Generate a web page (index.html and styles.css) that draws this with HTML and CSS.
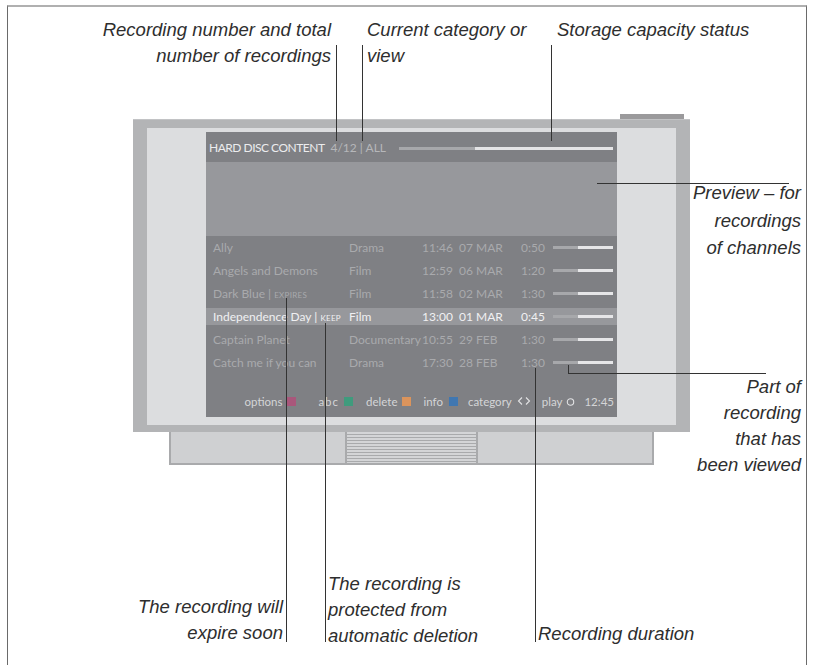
FILE: index.html
```html
<!DOCTYPE html>
<html lang="en">
<head>
    <meta charset="UTF-8">
    <meta name="viewport" content="width=device-width, initial-scale=1.0">
    <title>Hard Disc Content</title>
    <link rel="stylesheet" href="styles.css">
</head>
<body>

    <div class="sheet">

        <!-- Television -->
        <div class="device">
            <div class="knob"></div>
            <div class="cabinet">
                <div class="bezel">
                    <div class="screen">

                        <div class="hdr">
                            <span class="hdr-title">HARD DISC CONTENT</span>
                            <span class="hdr-count">4/12 | ALL</span>
                            <span class="storage"></span>
                        </div>

                        <div class="preview"></div>

                        <div class="list">
                            <div class="row">
                                <span>Ally</span><span>Drama</span><span>11:46</span><span>07 MAR</span><span class="dur">0:50</span><span class="seen"></span>
                            </div>
                            <div class="row">
                                <span>Angels and Demons</span><span>Film</span><span>12:59</span><span>06 MAR</span><span class="dur">1:20</span><span class="seen"></span>
                            </div>
                            <div class="row">
                                <span>Dark Blue | <small>EXPIRES</small></span><span>Film</span><span>11:58</span><span>02 MAR</span><span class="dur">1:30</span><span class="seen"></span>
                            </div>
                            <div class="row selected">
                                <span>Independence Day | <small>KEEP</small></span><span>Film</span><span>13:00</span><span>01 MAR</span><span class="dur">0:45</span><span class="seen"></span>
                            </div>
                            <div class="row">
                                <span>Captain Planet</span><span>Documentary</span><span>10:55</span><span>29 FEB</span><span class="dur">1:30</span><span class="seen"></span>
                            </div>
                            <div class="row">
                                <span>Catch me if you can</span><span>Drama</span><span>17:30</span><span>28 FEB</span><span class="dur">1:30</span><span class="seen"></span>
                            </div>
                        </div>

                        <div class="keys">
                            <span class="key">options <i class="sq pink"></i></span>
                            <span class="key abc">abc <i class="sq green"></i></span>
                            <span class="key del">delete <i class="sq orange"></i></span>
                            <span class="key info">info <i class="sq blue"></i></span>
                            <span class="key cat">category
                                <svg width="14" height="10" viewBox="0 0 14 10"><path d="M5 1.5 1.5 5 5 8.5M9 1.5 12.5 5 9 8.5" fill="none" stroke="#e2e2e4" stroke-width="1.1"/></svg>
                            </span>
                            <span class="key play">play
                                <svg width="9" height="9" viewBox="0 0 9 9"><circle cx="4.5" cy="5" r="3.2" fill="none" stroke="#e2e2e4" stroke-width="1.1"/></svg>
                            </span>
                            <span class="key clock">12:45</span>
                        </div>

                    </div>
                </div>
            </div>
            <div class="stand">
                <div class="foot"></div>
                <div class="grille"></div>
                <div class="foot"></div>
            </div>
        </div>

        <!-- Callouts -->
        <p class="note n-number">Recording number and total<br>number of recordings</p>
        <p class="note n-category">Current category or<br>view</p>
        <p class="note n-storage">Storage capacity status</p>
        <p class="note n-preview">Preview – for<br>recordings<br>of channels</p>
        <p class="note n-viewed">Part of<br>recording<br>that has<br>been viewed</p>
        <p class="note n-expire">The recording will<br>expire soon</p>
        <p class="note n-keep">The recording is<br>protected from<br>automatic deletion</p>
        <p class="note n-duration">Recording duration</p>

        <div class="lead v l-number"></div>
        <div class="lead v l-category"></div>
        <div class="lead v l-storage"></div>
        <div class="lead h l-preview"></div>
        <div class="lead v l-viewed-v"></div>
        <div class="lead h l-viewed-h"></div>
        <div class="lead v l-expire"></div>
        <div class="lead v l-keep"></div>
        <div class="lead v l-duration"></div>

    </div>

</body>
</html>
```

FILE: styles.css
```css
body {
    margin: 0;
    background: #fff;
    overflow: hidden;
}
.sheet {
    position: relative;
    width: 798px;
    height: 660px;
    margin: 5px 0 0 7px;
    border-top: 2px solid #b0b0b0;
    border-left: 1px solid #6a6a6a;
    border-right: 1px solid #6a6a6a;
}

/* Television */
.device {
    width: 557px;
    margin: 107px 0 0 125px;
}
.knob {
    width: 64px;
    height: 5px;
    margin-left: 487px;
    background: #9b9a9c;
}
.cabinet {
    height: 313px;
    box-sizing: border-box;
    padding: 8px 14px 7px;
    background: #b3b4b6;
    border-top: 1px solid #c2c3c5;
}
.bezel {
    height: 100%;
    box-sizing: border-box;
    padding: 4px 59px 8px;
    background: #dcdddf;
}
.screen {
    height: 285px;
    background: #7f8084;
    font-family: Lato, "Liberation Sans", sans-serif;
    font-size: 12px;
    color: #a9aaad;
}
.hdr {
    height: 30px;
    display: flex;
    align-items: center;
    padding-left: 3px;
}
.hdr-title {
    color: #ececee;
    letter-spacing: -0.5px;
}
.hdr-count {
    margin-left: 6px;
    color: #b6b7ba;
}
.storage {
    width: 214px;
    height: 3px;
    margin: 2px 4px 0 auto;
    background: linear-gradient(to right, #a7a8ab 76px, #e4e4e6 76px);
}
.preview {
    height: 74px;
    background: #97989c;
}
.list {
    display: flex;
    flex-direction: column;
    gap: 6px;
    padding-top: 3px;
}
.row {
    display: grid;
    grid-template-columns: 136px 73px 37px 60px 26px 72px;
    align-items: center;
    height: 17px;
    padding-left: 7px;
}
.row small {
    font-size: 8px;
    letter-spacing: 0.3px;
}
.row .dur {
    text-align: right;
}
.row .seen {
    justify-self: end;
    width: 60px;
    height: 3px;
    margin-right: 4px;
    background: linear-gradient(to right, #a7a8ab 25px, #e6e6e8 25px);
}
.row.selected {
    background: #97989c;
    color: #f0f0f2;
}
.keys {
    display: flex;
    justify-content: flex-end;
    align-items: center;
    height: 16px;
    margin-top: 22px;
    padding-right: 3px;
    color: #d4d5d7;
    font-size: 11.5px;
}
.key {
    display: flex;
    align-items: center;
    gap: 5px;
}
.key.abc {
    margin-left: 22px;
    letter-spacing: 1px;
}
.key.del { margin-left: 13px; }
.key.info { margin-left: 12px; gap: 6px; }
.key.cat { margin-left: 10px; }
.key.play { margin-left: 11px; gap: 4px; }
.key.clock { margin-left: 9px; }
.sq {
    display: inline-block;
    width: 9px;
    height: 9px;
}
.pink { background: #a9577b; }
.green { background: #3f9b7d; }
.orange { background: #db945c; }
.blue { background: #4077b1; }

.stand {
    display: flex;
    width: 485px;
    height: 33px;
    margin-left: 36px;
}
.foot {
    flex: 1;
    background: #cfd0d2;
    border: 2px solid #a9aaac;
    border-top: none;
}
.grille {
    width: 129px;
    border-bottom: 2px solid #a9aaac;
    background: repeating-linear-gradient(to bottom, #d4d5d7 0 2px, #a9aaac 2px 3px);
}

/* Callouts */
.note {
    position: absolute;
    margin: 0;
    font-family: "Liberation Sans", Arial, sans-serif;
    font-style: italic;
    font-size: 18.5px;
    line-height: 26px;
    color: #2e2e2e;
    white-space: nowrap;
}
.n-number { left: 73px; top: 10px; width: 250px; text-align: right; }
.n-category { left: 359px; top: 10px; }
.n-storage { left: 549px; top: 10px; }
.n-preview { left: 643px; top: 172px; width: 150px; text-align: right; line-height: 27.5px; }
.n-viewed { left: 643px; top: 367px; width: 150px; text-align: right; }
.n-expire { left: 75px; top: 587px; width: 200px; text-align: right; }
.n-keep { left: 320px; top: 564px; }
.n-duration { left: 530px; top: 614px; }

.lead {
    position: absolute;
    background: #333;
}
.lead.v { width: 1px; }
.lead.h { height: 1px; }
.l-number { left: 328px; top: 38px; height: 96px; }
.l-category { left: 354px; top: 38px; height: 96px; }
.l-storage { left: 543px; top: 38px; height: 96px; }
.l-preview { left: 589px; top: 176px; width: 192px; }
.l-viewed-v { left: 560px; top: 358px; height: 8px; }
.l-viewed-h { left: 560px; top: 366px; width: 198px; }
.l-expire { left: 278px; top: 291px; height: 344px; }
.l-keep { left: 317px; top: 316px; height: 319px; }
.l-duration { left: 527px; top: 361px; height: 274px; }
```
